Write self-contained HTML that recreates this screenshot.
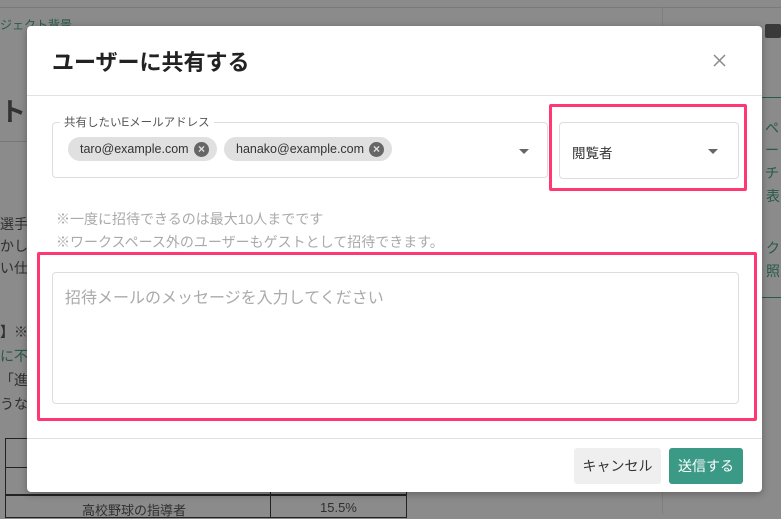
<!DOCTYPE html>
<html style="background:#8b8b8b"><head><meta charset="utf-8"><style>
*{box-sizing:border-box;margin:0;padding:0}
body{width:781px;height:514px;overflow:hidden;background:#8b8b8b;font-family:"Liberation Sans","Noto Sans CJK JP",sans-serif;position:relative}
.a{position:absolute}
.bg{color:#2f2f2f;font-size:14px;white-space:nowrap}
.g{color:#285a48}
.modal{left:27px;top:26px;width:735px;height:466px;background:#fff;border-radius:4px;box-shadow:0 2px 8px rgba(0,0,0,.3)}
.pink{border:3px solid #fd3872;border-radius:2px}
</style></head><body>
<div class="a" style="left:0;top:7px;width:781px;height:1px;background:#7a7a7a"></div>
<div class="a" style="left:662px;top:7px;width:1px;height:507px;background:#7f7f7f"></div>
<div class="a bg g" style="left:0;top:16px;font-size:12px">ジェクト背景</div>
<div class="a bg" style="left:0;top:92px;font-size:26px;font-weight:bold;color:#333">ト背</div>
<div class="a" style="left:0;top:141px;width:27px;height:1px;background:#777"></div>
<div class="a bg" style="left:0;top:214px">選手の</div>
<div class="a bg" style="left:0;top:236px">かし引</div>
<div class="a bg" style="left:0;top:258px">い仕事</div>
<div class="a bg" style="left:0;top:322px;font-weight:bold">】※</div>
<div class="a bg g" style="left:0;top:346px">に不</div>
<div class="a bg" style="left:0;top:370px">「進路</div>
<div class="a bg" style="left:0;top:394px">うな</div>
<div class="a" style="left:5px;top:438px;width:402px;height:80px;border:1px solid #222"></div>
<div class="a" style="left:5px;top:467px;width:402px;height:1px;background:#222"></div>
<div class="a" style="left:5px;top:494px;width:402px;height:2px;background:#222"></div>
<div class="a" style="left:270px;top:438px;width:1px;height:80px;background:#222"></div>
<div class="a bg" style="left:82px;top:500px;font-size:13px">高校野球の指導者</div>
<div class="a bg" style="left:320px;top:500px;font-size:13px">15.5%</div>
<div class="a" style="left:765px;top:24px;width:16px;height:14px;background:#3a3a3a;border-radius:2px"></div>
<div class="a bg g" style="left:765px;top:118px">ペ</div>
<div class="a bg g" style="left:765px;top:140px">ー</div>
<div class="a bg g" style="left:765px;top:163px">チ</div>
<div class="a bg g" style="left:766px;top:186px">表</div>
<div class="a bg g" style="left:766px;top:238px">ク</div>
<div class="a bg g" style="left:766px;top:261px">照</div>
<div class="a" style="left:762px;top:97px;width:19px;height:1px;background:#285a48"></div>
<div class="a" style="left:762px;top:297px;width:19px;height:1px;background:#285a48"></div>

<div class="a modal">
  <div class="a" style="left:25px;top:19px;font-size:22px;font-weight:bold;color:#222">ユーザーに共有する</div>
  <svg class="a" style="left:686px;top:28px" width="13" height="13" viewBox="0 0 13 13"><path d="M1 1L12 12M12 1L1 12" stroke="#888" stroke-width="1.5"/></svg>
  <div class="a" style="left:0;top:69px;width:735px;height:1px;background:#e2e2e2"></div>
  <div class="a" style="left:25px;top:96px;width:496px;height:56px;border:1px solid #ddd;border-radius:4px"></div>
  <div class="a" style="left:33px;top:88px;background:#fff;padding:0 4px;font-size:11.5px;color:#555">共有したいEメールアドレス</div>
  <div class="a" style="left:41px;top:111px;width:149px;height:24px;background:#e0e0e0;border-radius:12px;font-size:12.5px;color:#333;padding:5px 0 0 12px">taro@example.com<span class="a" style="right:8px;top:5px;width:15px;height:15px;border-radius:50%;background:#666;color:#e0e0e0;font-size:12px;line-height:15px;text-align:center;font-weight:bold">×</span></div>
  <div class="a" style="left:197px;top:111px;width:168px;height:24px;background:#e0e0e0;border-radius:12px;font-size:12.5px;color:#333;padding:5px 0 0 12px">hanako@example.com<span class="a" style="right:8px;top:5px;width:15px;height:15px;border-radius:50%;background:#666;color:#e0e0e0;font-size:12px;line-height:15px;text-align:center;font-weight:bold">×</span></div>
  <div class="a" style="left:492px;top:123px;border-left:5px solid transparent;border-right:5px solid transparent;border-top:5px solid #666"></div>
  <div class="a pink" style="left:522px;top:78px;width:198px;height:87px"></div>
  <div class="a" style="left:532px;top:96px;width:180px;height:57px;border:1px solid #ddd;border-radius:4px"></div>
  <div class="a" style="left:545px;top:116px;font-size:13.5px;color:#333">閲覧者</div>
  <div class="a" style="left:681px;top:123px;border-left:5px solid transparent;border-right:5px solid transparent;border-top:5px solid #666"></div>
  <div class="a" style="left:29px;top:183px;font-size:14px;color:#aaa">※一度に招待できるのは最大10人までです</div>
  <div class="a" style="left:29px;top:206px;font-size:14px;color:#aaa">※ワークスペース外のユーザーもゲストとして招待できます。</div>
  <div class="a pink" style="left:10px;top:226px;width:720px;height:169px"></div>
  <div class="a" style="left:25px;top:246px;width:687px;height:132px;border:1px solid #ddd;border-radius:4px"></div>
  <div class="a" style="left:38px;top:258px;font-size:16px;color:#aaa">招待メールのメッセージを入力してください</div>
  <div class="a" style="left:0;top:412px;width:735px;height:1px;background:#e2e2e2"></div>
  <div class="a" style="left:547px;top:422px;width:87px;height:36px;background:#efefef;border-radius:3px;font-size:14px;color:#333;text-align:center;line-height:36px">キャンセル</div>
  <div class="a" style="left:642px;top:422px;width:74px;height:36px;background:#3b9a86;border-radius:3px;font-size:14px;color:#fff;text-align:center;line-height:36px">送信する</div>
</div>
</body></html>
